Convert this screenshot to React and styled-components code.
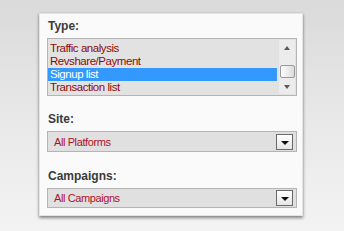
import React from "react"
import styled, { createGlobalStyle } from "styled-components"

const GlobalStyle = createGlobalStyle`
  html, body {
    margin: 0;
    padding: 0;
  }
  body {
    width: 344px;
    height: 231px;
    overflow: hidden;
    background: linear-gradient(to bottom, #dadada 0%, #e9e9e9 55%, #f3f3f3 100%);
    font-family: "Liberation Sans", Arial, sans-serif;
  }
`

const Page = styled.div`
  padding: 13px 41px 0 39px;
`

const Panel = styled.div`
  box-sizing: border-box;
  width: 264px;
  height: 203px;
  background: #fafafa;
  border: 1px solid #e4e4e4;
  box-shadow: 0 2px 3px rgba(0, 0, 0, 0.45), 0 0 2px rgba(0, 0, 0, 0.08);
  padding: 5px 5px 0 7px;
  display: flex;
  flex-direction: column;
`

const Field = styled.div`
  display: flex;
  flex-direction: column;
  margin-top: ${p => p.$gap || 0}px;
`

const Label = styled.div`
  font-size: 12px;
  font-weight: 700;
  line-height: 15px;
  color: #3a3a3a;
  margin-bottom: 4px;
  padding-left: 1px;
`

const ListBox = styled.div`
  box-sizing: border-box;
  height: 58px;
  border: 1px solid #b4b4b4;
  background: #e2e2e2;
  display: flex;
`

const Rows = styled.div`
  flex: 1;
  padding-top: 3px;
`

const Row = styled.div`
  height: 13px;
  line-height: 13px;
  font-size: 11.5px;
  letter-spacing: -0.45px;
  padding-left: 2px;
  margin-right: 2px;
  color: ${p => (p.$selected ? "#ffffff" : "#8e0a0a")};
  background: ${p => (p.$selected ? "#3399ff" : "transparent")};
`

const ScrollBar = styled.div`
  width: 16px;
  margin: 1px 1px 1px 0;
  background: #ececec;
  display: flex;
  flex-direction: column;
  align-items: center;
`

const Arrow = styled.div`
  width: 0;
  height: 0;
  border-left: 3.5px solid transparent;
  border-right: 3.5px solid transparent;
  ${p =>
    p.$up
      ? "border-bottom: 4px solid #5a5a5a;"
      : "border-top: 4px solid #5a5a5a;"}
  margin: ${p => (p.$up ? "6px 0 0" : "auto 0 5px")};
`

const Thumb = styled.div`
  box-sizing: border-box;
  width: 15px;
  height: 13px;
  margin-top: 15px;
  border: 1px solid #9a9a9a;
  border-radius: 2px;
  background: linear-gradient(to right, #fdfdfd, #dcdcdc);
`

const SelectBox = styled.div`
  box-sizing: border-box;
  height: ${p => p.$h || 21}px;
  border: 1px solid #b4b4b4;
  background: #e0e0e0;
  display: flex;
  align-items: center;
  justify-content: space-between;
  padding: 0 3px 0 6px;
`

const SelectText = styled.span`
  font-size: 11px;
  letter-spacing: -0.4px;
  color: #b0101f;
`

const DropButton = styled.div`
  box-sizing: border-box;
  width: 17px;
  height: 16px;
  border: 1px solid #6a6a6a;
  background: linear-gradient(to bottom, #ffffff, #e6e6e6);
  display: flex;
  align-items: center;
  justify-content: center;
  padding-top: 2px;
  &::after {
    content: "";
    border-left: 4px solid transparent;
    border-right: 4px solid transparent;
    border-top: 4px solid #111;
  }
`

const types = ["Traffic analysis", "Revshare/Payment", "Signup list", "Transaction list"]

function Select({ value, height }) {
  return (
    <SelectBox $h={height}>
      <SelectText>{value}</SelectText>
      <DropButton />
    </SelectBox>
  )
}

export default function App() {
  return (
    <>
      <GlobalStyle />
      <Page>
        <Panel>
          <Field>
            <Label>Type:</Label>
            <ListBox>
              <Rows>
                {types.map(t => (
                  <Row key={t} $selected={t === "Signup list"}>
                    {t}
                  </Row>
                ))}
              </Rows>
              <ScrollBar>
                <Arrow $up />
                <Thumb />
                <Arrow />
              </ScrollBar>
            </ListBox>
          </Field>
          <Field $gap={16}>
            <Label>Site:</Label>
            <Select value="All Platforms" height={21} />
          </Field>
          <Field $gap={17}>
            <Label>Campaigns:</Label>
            <Select value="All Campaigns" height={20} />
          </Field>
        </Panel>
      </Page>
    </>
  )
}
